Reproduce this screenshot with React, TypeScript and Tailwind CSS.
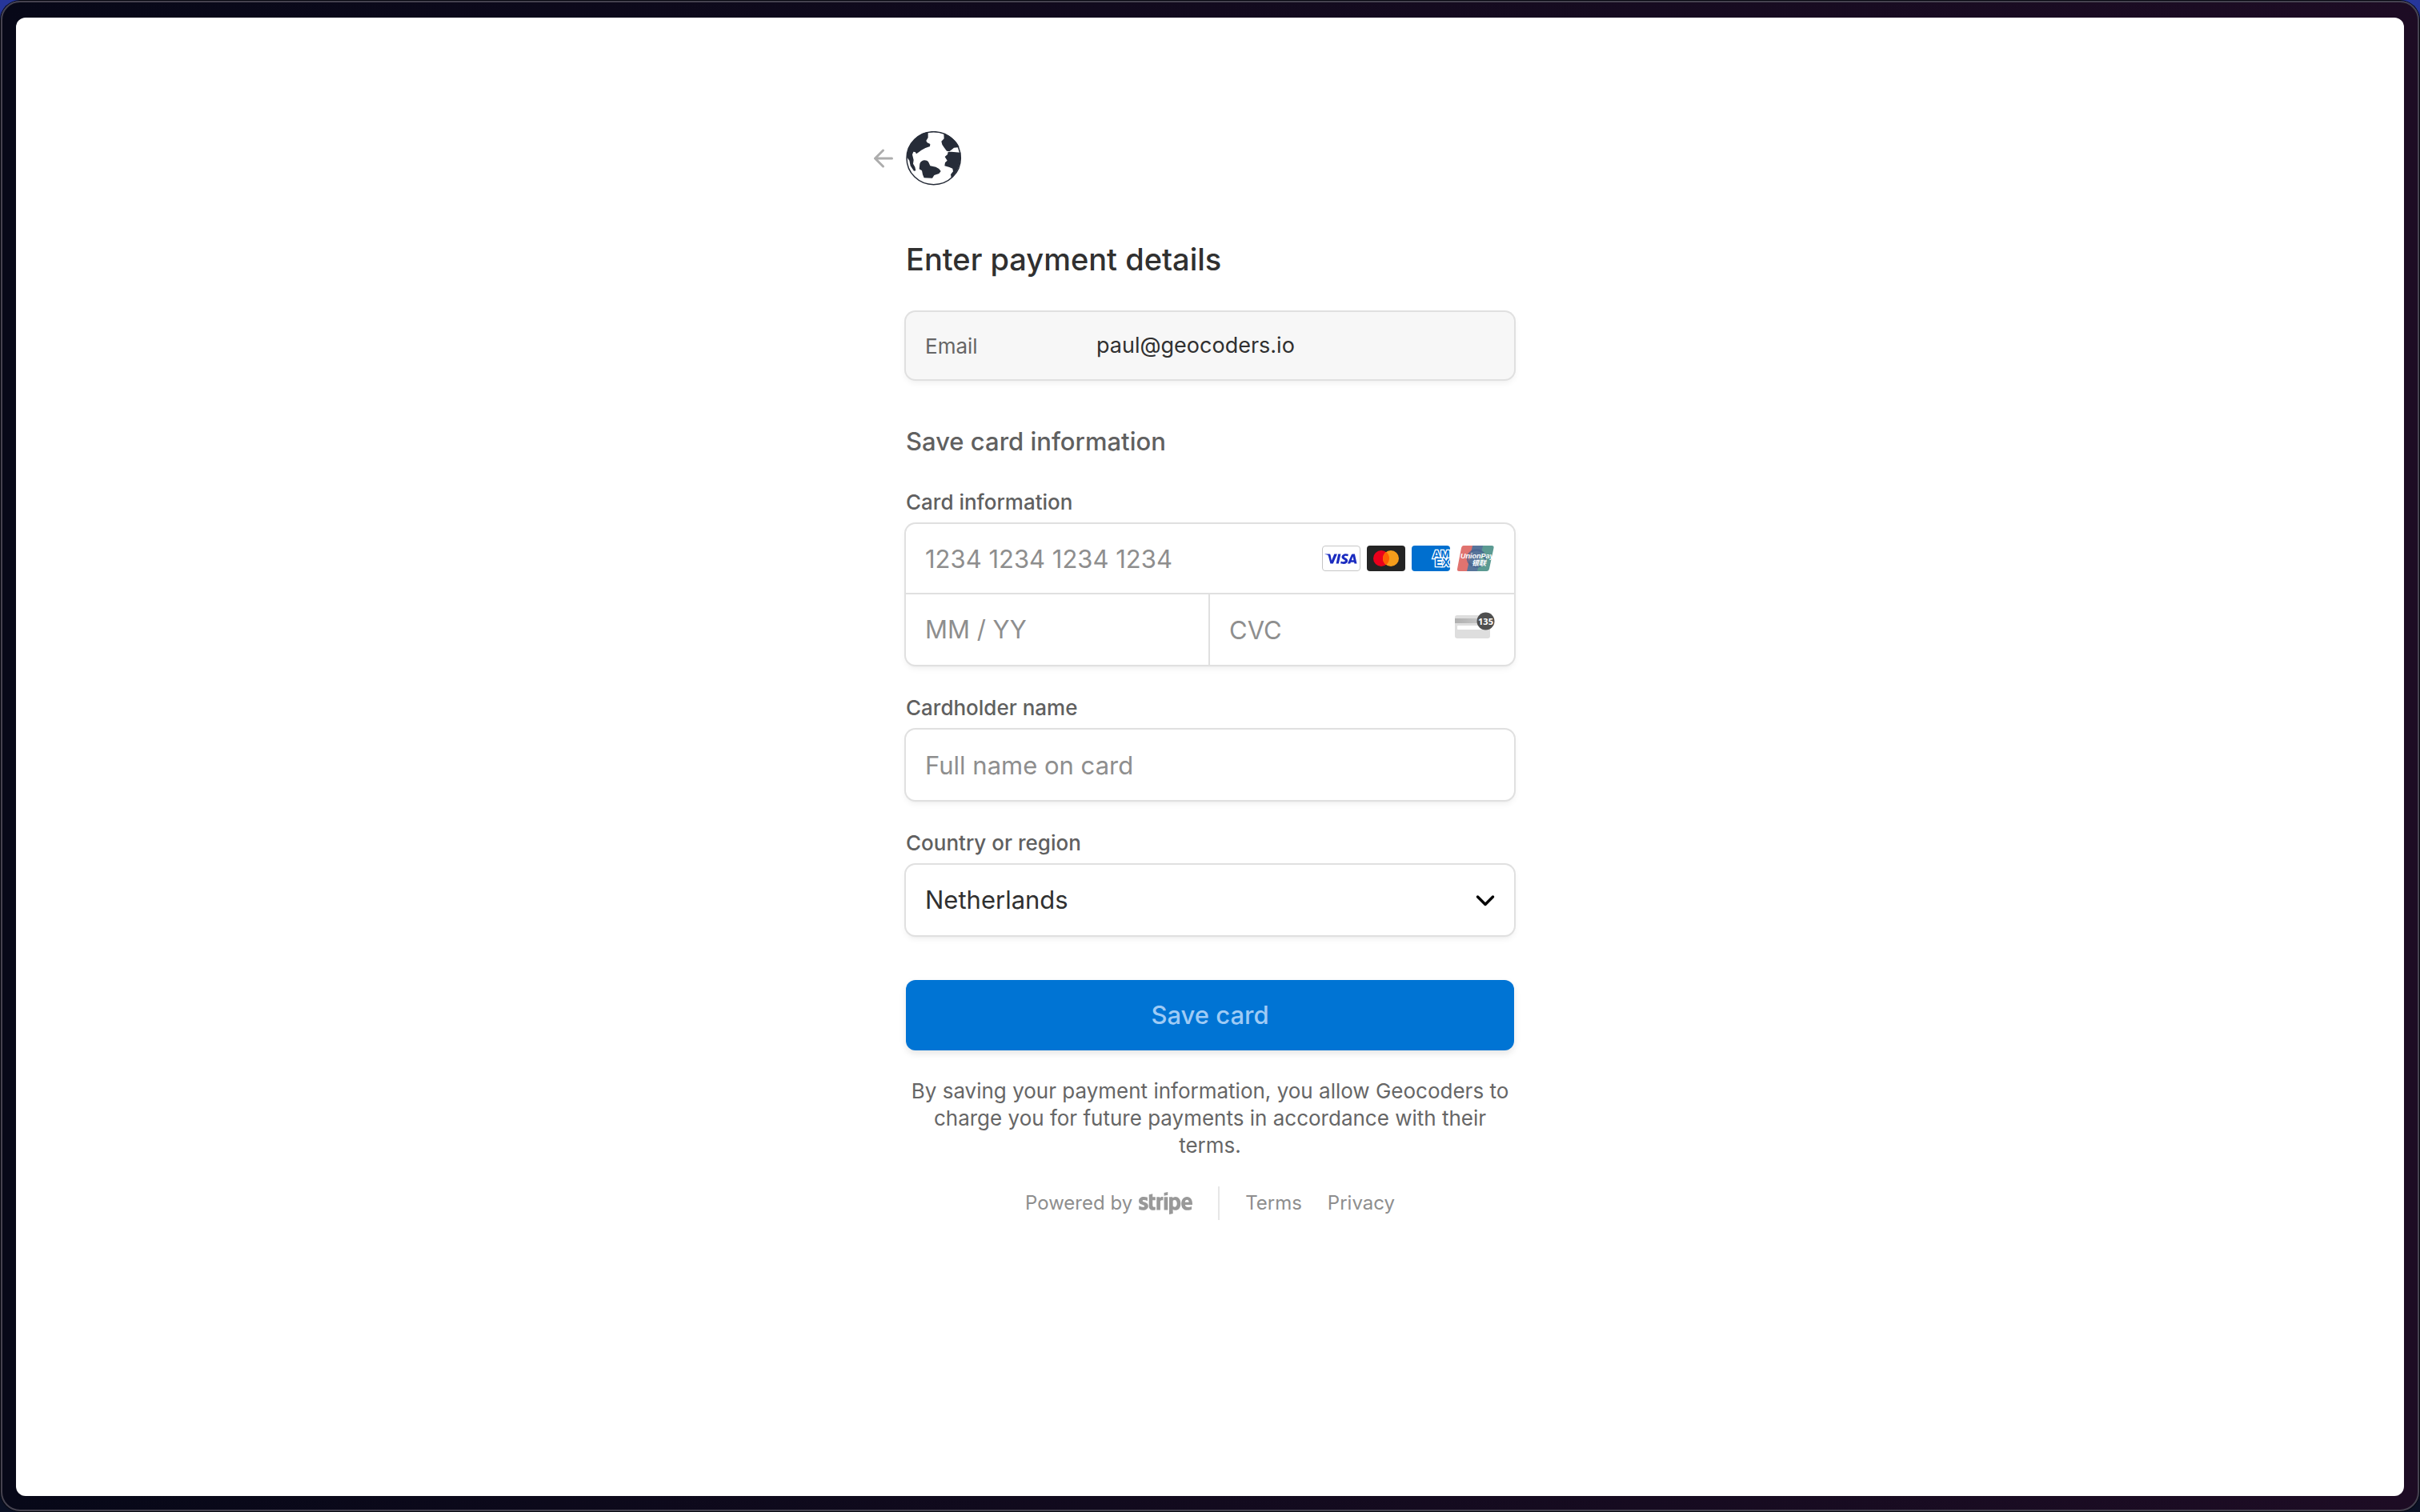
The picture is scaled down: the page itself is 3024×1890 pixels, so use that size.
import React from "react";

const FIELD = "rounded-[12px] bg-white shadow-[0_0_0_2px_#e0e0e0,0_4px_8px_rgba(0,0,0,0.07),0_2px_3px_rgba(0,0,0,0.05)]";
const INPUT = "bg-transparent px-6 text-[31px] outline-none placeholder:text-[#8e8e8e]";
const LABEL = "block text-[26px] leading-8 font-medium text-[#606060]";

function BackArrow() {
  return (
    <svg viewBox="0 0 24 24" className="h-6 w-6" fill="none" stroke="#adadad" strokeWidth="3" strokeLinecap="round" strokeLinejoin="round" aria-hidden="true">
      <path d="M22.5 12H2M11.500 2L1.500 12L11.500 22" />
    </svg>
  );
}

function Globe() {
  return (
    <svg viewBox="0 0 210 204" className="h-[68px] w-[70px]" aria-hidden="true">
      <ellipse cx="104" cy="101" rx="101" ry="99" fill="#fff" stroke="#262c38" strokeWidth="4.500" />
      <path
        fill="#262c38"
        d="M83 3C40 10 6 50 4 98L13 110L17 130L30 149L37 148L34 134L27 122L29 108L24 88L28 77L35 78L39 85L48 79L58 71L73 63L90 57L91 48L80 43L76 36L83 24ZM142 8C170 18 192 38 200 60L180 62L172 69L163 76L153 74L143 61L136 50L133 38L143 28ZM205 80C209 118 193 155 170 175L168 162L177 151L175 140L163 135L145 130L147 118L155 110L146 96L156 87L158 78L170 77ZM52 122C56 108 76 104 85 116L91 130L112 134L124 141L131 150L124 159L106 165L99 176L68 175L63 163L60 148L50 142Z"
      />
    </svg>
  );
}

function Visa() {
  return (
    <svg viewBox="0 0 48 32" className="h-8 w-12 shrink-0" role="img" aria-label="Visa">
      <rect x="0.500" y="0.500" width="47" height="31" rx="3.500" fill="#fff" stroke="#c6c6c6" />
      <path
        fill="#1b2cc0"
        d="M18.900 10.500L13.800 22.600H10.400L7.900 12.900C7.700 12.300 7.600 12.100 7.100 11.800C6.200 11.300 4.800 10.900 3.500 10.700L3.600 10.500H9.100C9.800 10.500 10.400 11 10.600 11.700L11.900 18.800L15.300 10.500ZM32.200 18.700C32.200 15.500 27.800 15.300 27.800 13.900C27.800 13.400 28.200 13 29.200 12.800C30.200 12.700 31.300 12.900 32.300 13.300L32.900 10.700C32.100 10.400 31.100 10.200 29.900 10.200C26.800 10.200 24.500 11.900 24.500 14.200C24.500 16 26 16.900 27.200 17.500C28.400 18.100 28.800 18.400 28.800 19C28.800 19.800 27.800 20.200 26.900 20.200C25.400 20.200 24.400 19.800 23.700 19.400L23.100 22.200C23.900 22.600 25.300 22.800 26.800 22.900C30.200 22.900 32.200 21.200 32.200 18.700ZM40.500 22.600H43.500L40.900 10.500H38.100C37.500 10.500 37 10.800 36.700 11.400L31.900 22.600H35.200L35.900 20.800H40ZM36.900 18.300L38.500 13.800L39.500 18.300ZM23.400 10.500L20.800 22.600H17.600L20.200 10.500Z"
      />
    </svg>
  );
}

function Mastercard() {
  return (
    <svg viewBox="0 0 48 32" className="h-8 w-12 shrink-0" role="img" aria-label="Mastercard">
      <rect width="48" height="32" rx="4" fill="#242424" />
      <circle cx="18" cy="16" r="10" fill="#eb001b" />
      <circle cx="30" cy="16" r="10" fill="#f79e1b" />
      <path d="M24 8A10 10 0 0 1 24 24A10 10 0 0 1 24 8Z" fill="#ff5f00" />
    </svg>
  );
}

function Amex() {
  return (
    <svg viewBox="0 0 48 32" className="h-8 w-12 shrink-0" role="img" aria-label="American Express">
      <defs>
        <clipPath id="amex-card">
          <rect width="48" height="32" rx="4" />
        </clipPath>
      </defs>
      <g clipPath="url(#amex-card)">
        <rect width="48" height="32" fill="#006fcf" />
        <g fontFamily="Liberation Sans, sans-serif" fontSize="14" fontWeight="700" fill="#006fcf" stroke="#fff" strokeWidth="2.600" style={{ paintOrder: "stroke" }}>
          <text x="26" y="15.500">AM</text>
          <text x="29" y="26">EX</text>
        </g>
      </g>
    </svg>
  );
}

function UnionPay() {
  return (
    <svg viewBox="0 0 48 32" className="h-8 w-12 shrink-0" role="img" aria-label="UnionPay">
      <path d="M9 0H22L15 32H3C1.500 32 .5 31 1 29L6 3C6.500 1 7.500 0 9 0Z" fill="#e0736f" />
      <path d="M20 0H34L27 32H13Z" fill="#57749a" />
      <path d="M33 0H44C46 0 47 1 46.500 3L41 29C40.500 31 39.500 32 37.500 32H26Z" fill="#5b9a92" />
      <ellipse cx="25" cy="16" rx="11" ry="10.500" fill="none" stroke="#47638f" strokeWidth="2.500" opacity=".75" />
      <text x="5" y="16" fontFamily="Liberation Sans, sans-serif" fontSize="9" fontWeight="700" fontStyle="italic" fill="#fff">UnionPay</text>
      <text x="19" y="25" fontFamily="Noto Sans CJK SC, sans-serif" fontSize="9" fontWeight="700" fontStyle="italic" fill="#fff">银联</text>
    </svg>
  );
}

function CvcCard() {
  return (
    <svg viewBox="0 0 50 34" className="h-[34px] w-[50px] shrink-0" aria-hidden="true">
      <defs>
        <linearGradient id="band-shade" x1="0" y1="0" x2="1" y2="0">
          <stop offset="0" stopColor="#b0b0b0" />
          <stop offset="1" stopColor="#cfcfcf" />
        </linearGradient>
      </defs>
      <rect y="4" width="44" height="29" rx="3" fill="#dedede" />
      <rect y="8" width="44" height="6" fill="url(#band-shade)" />
      <rect x="3" y="17" width="32" height="5" rx="1" fill="#fff" />
      <circle cx="38.500" cy="11.500" r="11" fill="#4f4f4f" />
      <text x="38.500" y="15.500" textAnchor="middle" fontFamily="Open Sans, sans-serif" fontSize="11" fontWeight="700" fill="#fff">135</text>
    </svg>
  );
}

function Chevron() {
  return (
    <svg viewBox="0 0 24 24" className="pointer-events-none absolute top-8 right-6 h-6 w-6" fill="none" stroke="#000" strokeWidth="3.500" strokeLinecap="round" strokeLinejoin="round" aria-hidden="true">
      <path d="M2.500 8L12 17.500L21.500 8" />
    </svg>
  );
}

function StripeLogo() {
  return (
    <svg viewBox="0 0 360 150" className="h-[28px] w-[67px]" role="img" aria-label="stripe" fill="#999">
      <path d="M360 77.400c0-25.600-12.400-45.800-36.100-45.800-23.800 0-38.200 20.200-38.200 45.600 0 30.100 17 45.300 41.400 45.300 11.900 0 20.900-2.700 27.700-6.500v-20c-6.800 3.400-14.600 5.500-24.500 5.500-9.700 0-18.300-3.400-19.400-15.200h48.900c0-1.300.2-6.500.2-8.900zm-49.400-9.500c0-11.300 6.900-16 13.200-16 6.100 0 12.600 4.700 12.600 16h-25.800zM247.100 31.600c-9.800 0-16.100 4.600-19.600 7.800l-1.300-6.200h-22v116.600l25-5.300.1-28.300c3.600 2.600 8.900 6.300 17.700 6.300 17.900 0 34.200-14.400 34.200-46.100-.1-29-16.600-44.800-34.100-44.800zm-6 68.900c-5.900 0-9.400-2.100-11.800-4.700l-.1-37.100c2.600-2.900 6.200-4.900 11.900-4.900 9.100 0 15.400 10.200 15.400 23.300 0 13.400-6.200 23.400-15.400 23.400zM169.800 25.700l25.100-5.400V0l-25.100 5.300zM169.800 33.300h25.100v87.500h-25.100zM142.900 40.700l-1.600-7.400h-21.600v87.500h25V61.500c5.900-7.700 15.900-6.300 19-5.200v-23c-3.200-1.200-14.900-3.400-20.800 7.400zM92.900 11.600l-24.400 5.200-.1 80.100c0 14.800 11.100 25.700 25.900 25.700 8.200 0 14.200-1.500 17.500-3.300V99c-3.200 1.300-19 5.900-19-8.900V54.600h19V33.300h-19zM25.300 58.700c0-3.900 3.200-5.400 8.500-5.400 7.600 0 17.200 2.300 24.800 6.400V36.200c-8.300-3.300-16.500-4.600-24.800-4.600C13.500 31.600 0 42.200 0 59.900c0 27.600 38 23.200 38 35.100 0 4.600-4 6.100-9.600 6.100-8.300 0-18.900-3.400-27.300-8v23.800c9.300 4 18.700 5.700 27.300 5.700 20.800 0 35.100-10.300 35.100-28.200-.1-29.800-38.200-24.500-38.200-35.700z" />
    </svg>
  );
}

export default function App() {
  return (
    <div className="flex min-h-screen flex-col bg-[linear-gradient(180deg,#26369a_0,#26369a_12px,#0a1024_40px)] p-px font-['Inter',sans-serif] text-[#303030]">
      <div className="flex grow flex-col rounded-[24px] border-2 border-[#45424f] bg-linear-to-r from-[#070818] to-[#1d0c24] px-[17px] pt-[19px] pb-[17px] shadow-[0_0_0_1px_#05060f]">
        <main className="flex grow flex-col items-center rounded-[12px] bg-white pt-[142px]">
          <div className="w-full max-w-[760px]">
            <header className="-ml-10 flex items-center gap-4">
              <button type="button" aria-label="Back">
                <BackArrow />
              </button>
              <Globe />
            </header>

            <h1 className="mt-16 text-[38px] leading-[56px] font-medium">Enter payment details</h1>

            <form onSubmit={(event) => event.preventDefault()}>
              <dl className="mt-[38px] flex h-[84px] items-center rounded-[12px] bg-[#f7f7f7] px-6 shadow-[0_0_0_2px_#e0e0e0,0_4px_8px_rgba(0,0,0,0.07)]">
                <dt className="w-[214px] text-[26px] text-[#666]">Email</dt>
                <dd className="text-[27px]">paul@geocoders.io</dd>
              </dl>

              <h2 className="mt-[58px] text-[31px] leading-10 font-medium text-[#606060]">Save card information</h2>

              <fieldset className="mt-10 min-w-0">
                <legend className={LABEL}>Card information</legend>
                <div className={`${FIELD} mt-[11px]`}>
                  <div className="flex h-[88px] items-center gap-2 border-b-2 border-[#e0e0e0] pr-6">
                    <input aria-label="Card number" placeholder="1234 1234 1234 1234" className={`${INPUT} h-full min-w-0 grow`} />
                    <Visa />
                    <Mastercard />
                    <Amex />
                    <UnionPay />
                  </div>
                  <div className="grid h-[88px] grid-cols-2">
                    <input aria-label="Expiry date" placeholder="MM / YY" className={`${INPUT} min-w-0 border-r-2 border-[#e0e0e0]`} />
                    <div className="flex min-w-0 items-center pr-6">
                      <input aria-label="CVC" placeholder="CVC" className={`${INPUT} h-full min-w-0 grow`} />
                      <div className="pb-[10px]">
                        <CvcCard />
                      </div>
                    </div>
                  </div>
                </div>
              </fieldset>

              <label htmlFor="holder" className={`${LABEL} mt-[38px]`}>Cardholder name</label>
              <input id="holder" placeholder="Full name on card" className={`${FIELD} mt-[11px] block h-[88px] w-full px-6 text-[31px] outline-none placeholder:text-[#8e8e8e]`} />

              <label htmlFor="country" className={`${LABEL} mt-[38px]`}>Country or region</label>
              <div className="relative mt-[11px]">
                <select id="country" defaultValue="Netherlands" className={`${FIELD} block h-[88px] w-full appearance-none px-6 text-[31px] outline-none`}>
                  <option>Netherlands</option>
                </select>
                <Chevron />
              </div>

              <button type="submit" className="mt-14 block h-[88px] w-full rounded-[12px] bg-[#0074d4] text-[31px] font-medium text-[#9fcbf5] shadow-[0_4px_8px_rgba(0,0,0,0.1)]">Save card</button>
            </form>

            <p className="mt-[34px] text-center text-[26px] leading-[34px] text-[#666]">
              By saving your payment information, you allow Geocoders to charge you for future payments in accordance with their terms.
            </p>

            <footer className="mt-[34px] flex items-center justify-center text-[24px] text-[#8e8e8e]">
              <a href="#stripe" className="flex items-center gap-2">
                Powered by
                <StripeLogo />
              </a>
              <div className="mx-8 h-[42px] w-[2px] bg-[#e6e6e6]" />
              <nav className="flex gap-8">
                <a href="#terms">Terms</a>
                <a href="#privacy">Privacy</a>
              </nav>
            </footer>
          </div>
        </main>
      </div>
    </div>
  );
}
